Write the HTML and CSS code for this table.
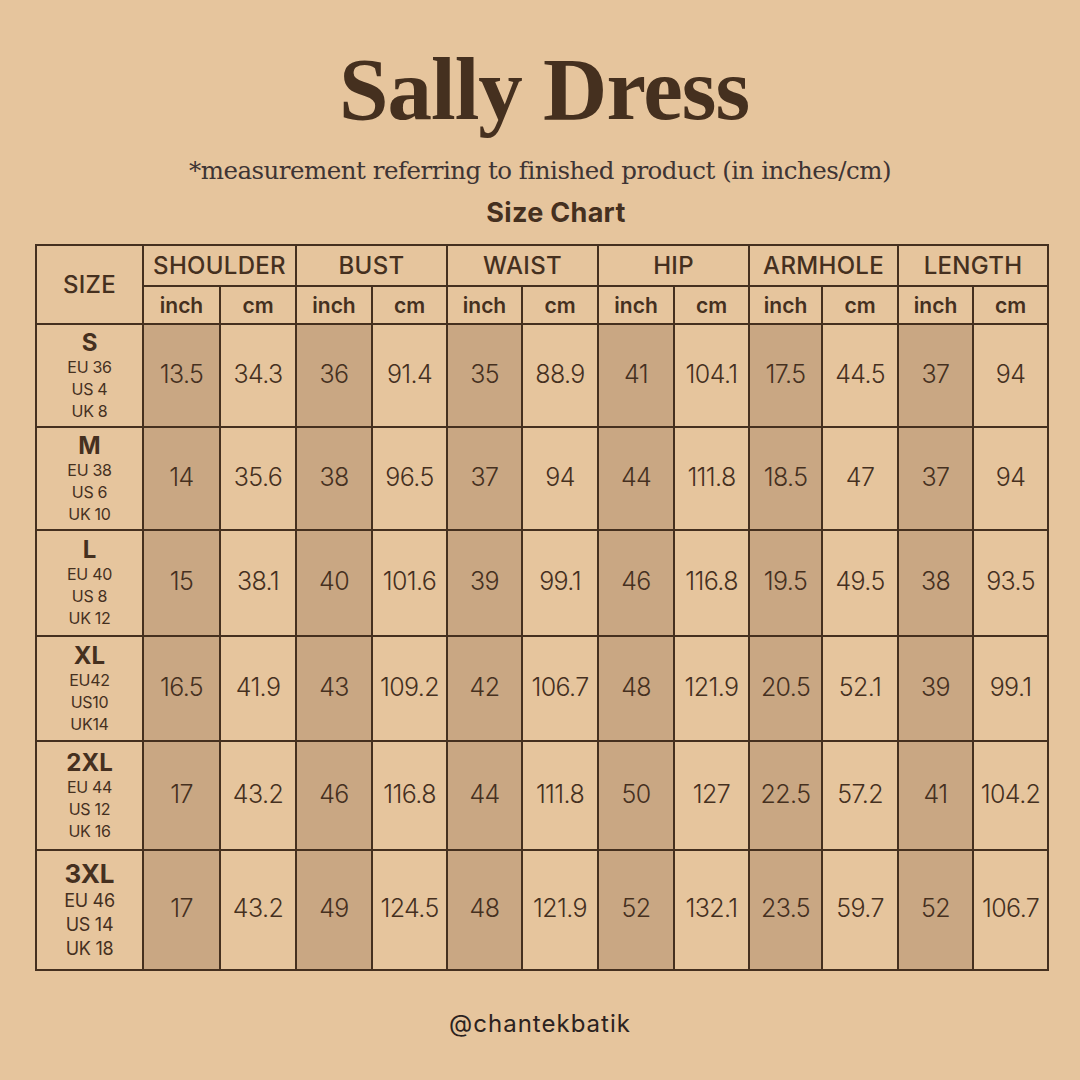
FILE: index.html
```html
<!DOCTYPE html>
<html>
<head>
<meta charset="utf-8">
<link rel="stylesheet" href="styles.css">
</head>
<body>
<div class="page">
  <h1 class="title">Sally Dress</h1>
  <p class="subtitle">*measurement referring to finished product (in inches/cm)</p>
  <p class="chart-label">Size Chart</p>
  <table class="chart">
    <colgroup>
      <col style="width:107px"><col style="width:77px"><col style="width:76px"><col style="width:76px"><col style="width:75px"><col style="width:75px"><col style="width:76px"><col style="width:76px"><col style="width:75px"><col style="width:73px"><col style="width:76px"><col style="width:75px"><col style="width:75px">
    </colgroup>
    <thead>
      <tr class="head1">
        <th rowspan="2" class="size-head">SIZE</th>
        <th colspan="2">SHOULDER</th>
        <th colspan="2">BUST</th>
        <th colspan="2">WAIST</th>
        <th colspan="2">HIP</th>
        <th colspan="2">ARMHOLE</th>
        <th colspan="2">LENGTH</th>
      </tr>
      <tr class="head2">
        <th>inch</th><th>cm</th><th>inch</th><th>cm</th><th>inch</th><th>cm</th><th>inch</th><th>cm</th><th>inch</th><th>cm</th><th>inch</th><th>cm</th>
      </tr>
    </thead>
    <tbody>
      <tr class="r-s">
        <td class="size"><span class="sz">S</span><span class="reg">EU 36</span><span class="reg">US 4</span><span class="reg">UK 8</span></td>
        <td class="in">13.5</td><td>34.3</td><td class="in">36</td><td>91.4</td><td class="in">35</td><td>88.9</td><td class="in">41</td><td>104.1</td><td class="in">17.5</td><td>44.5</td><td class="in">37</td><td>94</td>
      </tr>
      <tr class="r-m">
        <td class="size"><span class="sz">M</span><span class="reg">EU 38</span><span class="reg">US 6</span><span class="reg">UK 10</span></td>
        <td class="in">14</td><td>35.6</td><td class="in">38</td><td>96.5</td><td class="in">37</td><td>94</td><td class="in">44</td><td>111.8</td><td class="in">18.5</td><td>47</td><td class="in">37</td><td>94</td>
      </tr>
      <tr class="r-l">
        <td class="size"><span class="sz">L</span><span class="reg">EU 40</span><span class="reg">US 8</span><span class="reg">UK 12</span></td>
        <td class="in">15</td><td>38.1</td><td class="in">40</td><td>101.6</td><td class="in">39</td><td>99.1</td><td class="in">46</td><td>116.8</td><td class="in">19.5</td><td>49.5</td><td class="in">38</td><td>93.5</td>
      </tr>
      <tr class="r-xl">
        <td class="size"><span class="sz">XL</span><span class="reg">EU42</span><span class="reg">US10</span><span class="reg">UK14</span></td>
        <td class="in">16.5</td><td>41.9</td><td class="in">43</td><td>109.2</td><td class="in">42</td><td>106.7</td><td class="in">48</td><td>121.9</td><td class="in">20.5</td><td>52.1</td><td class="in">39</td><td>99.1</td>
      </tr>
      <tr class="r-2xl">
        <td class="size"><span class="sz">2XL</span><span class="reg">EU 44</span><span class="reg">US 12</span><span class="reg">UK 16</span></td>
        <td class="in">17</td><td>43.2</td><td class="in">46</td><td>116.8</td><td class="in">44</td><td>111.8</td><td class="in">50</td><td>127</td><td class="in">22.5</td><td>57.2</td><td class="in">41</td><td>104.2</td>
      </tr>
      <tr class="r-3xl">
        <td class="size"><span class="sz big">3XL</span><span class="reg big">EU 46</span><span class="reg big">US 14</span><span class="reg big">UK 18</span></td>
        <td class="in">17</td><td>43.2</td><td class="in">49</td><td>124.5</td><td class="in">48</td><td>121.9</td><td class="in">52</td><td>132.1</td><td class="in">23.5</td><td>59.7</td><td class="in">52</td><td>106.7</td>
      </tr>
    </tbody>
  </table>
  <p class="handle">@chantekbatik</p>
</div>
</body>
</html>
```
FILE: styles.css
```css
html, body {
  margin: 0;
  padding: 0;
  background: #e6c59d;
}
.page {
  width: 1080px;
  height: 1080px;
  box-sizing: border-box;
  padding-top: 44px;
  color: #45301f;
  font-family: Inter, "Noto Sans", sans-serif;
}
.title {
  margin: 0 0 0 8px;
  text-align: center;
  font-family: "Liberation Serif", "DejaVu Serif", serif;
  font-weight: 700;
  font-size: 89px;
  line-height: 90px;
  letter-spacing: -1px;
  color: #45301f;
}
.subtitle {
  margin: 22px 0 0 0;
  text-align: center;
  font-family: "DejaVu Serif", "Liberation Serif", serif;
  font-size: 24.5px;
  line-height: 30px;
  color: #3e3434;
  letter-spacing: -0.5px;
}
.chart-label {
  margin: 12px 0 0 32px;
  text-align: center;
  font-family: Inter, sans-serif;
  font-weight: 700;
  font-size: 27px;
  line-height: 30px;
  letter-spacing: 0.3px;
  color: #45301f;
}
.chart {
  margin: 16px 0 0 35px;
  border-collapse: collapse;
  table-layout: fixed;
  width: 1014px;
  border: 2px solid #45301f;
}
.chart th, .chart td {
  border: 2px solid #45301f;
  padding: 0;
  text-align: center;
  vertical-align: middle;
}
.head1 { height: 41px; }
.head2 { height: 38px; }
.head1 th {
  font-size: 24px;
  font-weight: 500;
  letter-spacing: 0.3px;
}
.size-head {
  font-size: 23px;
  font-weight: 600;
}
.head2 th {
  font-size: 21px;
  font-weight: 600;
}
.chart td {
  padding-bottom: 4px;
  font-size: 25px;
  font-weight: 300;
  letter-spacing: -0.6px;
  color: #45301f;
}
.chart td.size { padding-bottom: 0; }
.chart td.in { background: #c9a783; }
.r-s { height: 103px; }
.r-m { height: 103px; }
.r-l { height: 106px; }
.r-xl { height: 105px; }
.r-2xl { height: 109px; }
.r-3xl { height: 120px; }
.size span { display: block; }
.size .sz {
  font-size: 24px;
  font-weight: 700;
  line-height: 26px;
  letter-spacing: 0;
}
.size .sz.big { font-size: 26px; line-height: 30px; }
.size .reg {
  font-size: 16px;
  font-weight: 400;
  line-height: 22px;
  letter-spacing: -0.3px;
}
.size .reg.big { font-size: 18px; line-height: 24px; }
.handle {
  margin: 38px 0 0 0;
  text-align: center;
  font-family: Inter, sans-serif;
  font-size: 24px;
  font-weight: 400;
  letter-spacing: 1px;
  color: #2b2220;
}
```
